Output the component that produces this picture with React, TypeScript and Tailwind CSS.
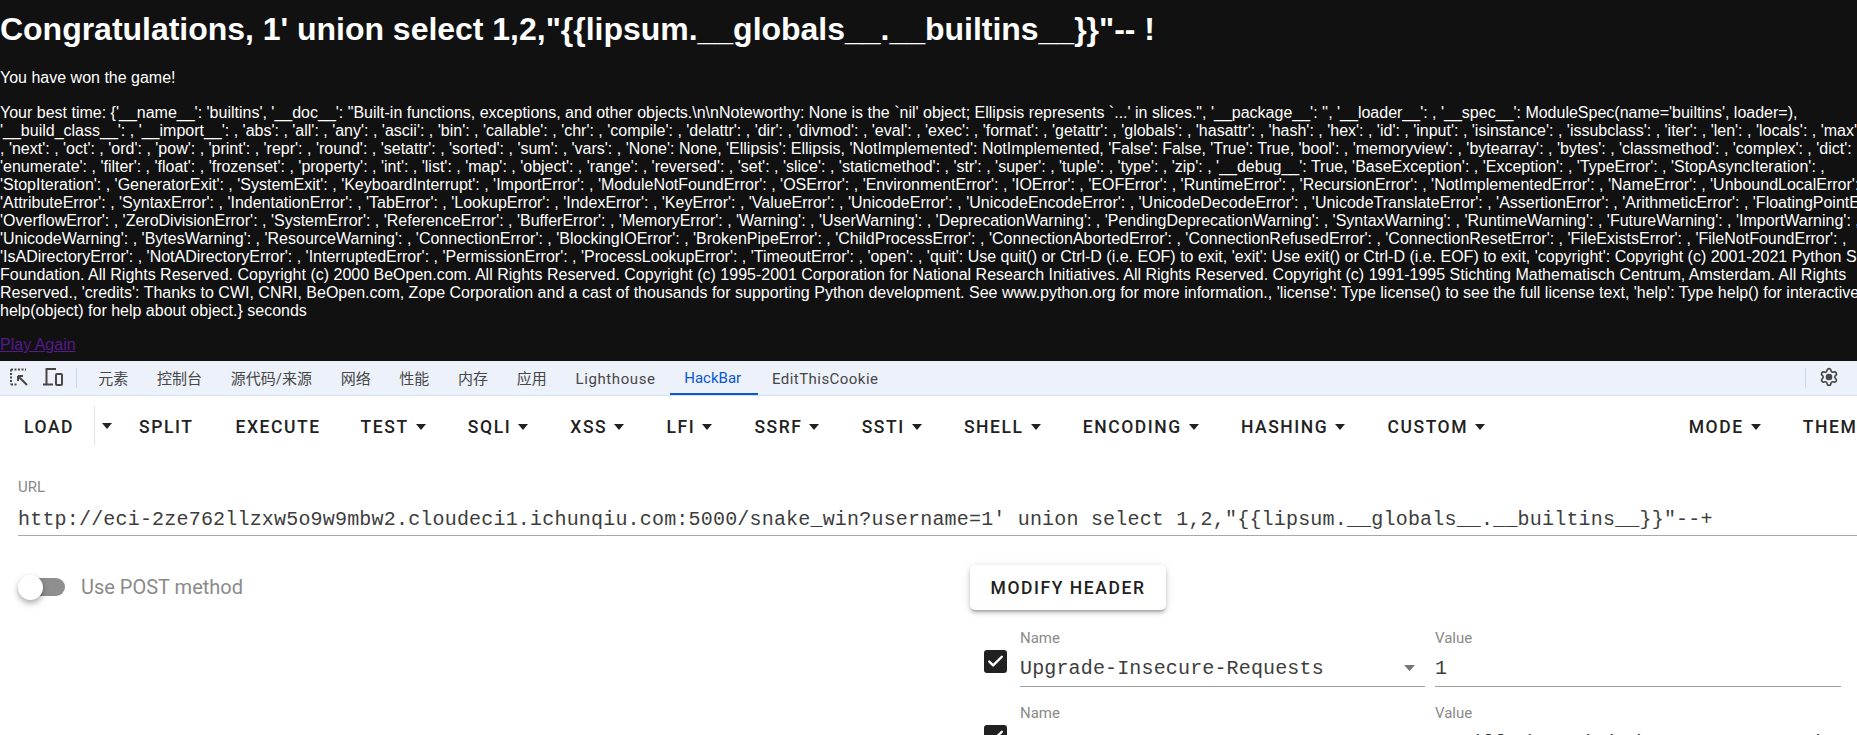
import { Settings, Check } from "lucide-react";

const lines = [
  `Your best time: {'__name__': 'builtins', '__doc__': "Built-in functions, exceptions, and other objects.\\n\\nNoteworthy: None is the \`nil' object; Ellipsis represents \`...' in slices.", '__package__': '', '__loader__': , '__spec__': ModuleSpec(name='builtins', loader=),`,
  `'__build_class__': , '__import__': , 'abs': , 'all': , 'any': , 'ascii': , 'bin': , 'callable': , 'chr': , 'compile': , 'delattr': , 'dir': , 'divmod': , 'eval': , 'exec': , 'format': , 'getattr': , 'globals': , 'hasattr': , 'hash': , 'hex': , 'id': , 'input': , 'isinstance': , 'issubclass': , 'iter': , 'len': , 'locals': , 'max': , 'min':`,
  `, 'next': , 'oct': , 'ord': , 'pow': , 'print': , 'repr': , 'round': , 'setattr': , 'sorted': , 'sum': , 'vars': , 'None': None, 'Ellipsis': Ellipsis, 'NotImplemented': NotImplemented, 'False': False, 'True': True, 'bool': , 'memoryview': , 'bytearray': , 'bytes': , 'classmethod': , 'complex': , 'dict': ,`,
  `'enumerate': , 'filter': , 'float': , 'frozenset': , 'property': , 'int': , 'list': , 'map': , 'object': , 'range': , 'reversed': , 'set': , 'slice': , 'staticmethod': , 'str': , 'super': , 'tuple': , 'type': , 'zip': , '__debug__': True, 'BaseException': , 'Exception': , 'TypeError': , 'StopAsyncIteration': ,`,
  `'StopIteration': , 'GeneratorExit': , 'SystemExit': , 'KeyboardInterrupt': , 'ImportError': , 'ModuleNotFoundError': , 'OSError': , 'EnvironmentError': , 'IOError': , 'EOFError': , 'RuntimeError': , 'RecursionError': , 'NotImplementedError': , 'NameError': , 'UnboundLocalError': ,`,
  `'AttributeError': , 'SyntaxError': , 'IndentationError': , 'TabError': , 'LookupError': , 'IndexError': , 'KeyError': , 'ValueError': , 'UnicodeError': , 'UnicodeEncodeError': , 'UnicodeDecodeError': , 'UnicodeTranslateError': , 'AssertionError': , 'ArithmeticError': , 'FloatingPointError': ,`,
  `'OverflowError': , 'ZeroDivisionError': , 'SystemError': , 'ReferenceError': , 'BufferError': , 'MemoryError': , 'Warning': , 'UserWarning': , 'DeprecationWarning': , 'PendingDeprecationWarning': , 'SyntaxWarning': , 'RuntimeWarning': , 'FutureWarning': , 'ImportWarning': ,`,
  `'UnicodeWarning': , 'BytesWarning': , 'ResourceWarning': , 'ConnectionError': , 'BlockingIOError': , 'BrokenPipeError': , 'ChildProcessError': , 'ConnectionAbortedError': , 'ConnectionRefusedError': , 'ConnectionResetError': , 'FileExistsError': , 'FileNotFoundError': ,`,
  `'IsADirectoryError': , 'NotADirectoryError': , 'InterruptedError': , 'PermissionError': , 'ProcessLookupError': , 'TimeoutError': , 'open': , 'quit': Use quit() or Ctrl-D (i.e. EOF) to exit, 'exit': Use exit() or Ctrl-D (i.e. EOF) to exit, 'copyright': Copyright (c) 2001-2021 Python Software`,
  `Foundation. All Rights Reserved. Copyright (c) 2000 BeOpen.com. All Rights Reserved. Copyright (c) 1995-2001 Corporation for National Research Initiatives. All Rights Reserved. Copyright (c) 1991-1995 Stichting Mathematisch Centrum, Amsterdam. All Rights`,
  `Reserved., 'credits': Thanks to CWI, CNRI, BeOpen.com, Zope Corporation and a cast of thousands for supporting Python development. See www.python.org for more information., 'license': Type license() to see the full license text, 'help': Type help() for interactive help, or`,
  `help(object) for help about object.} seconds`,
];

const tabs = [
  { t: "元素", c: "px-[14.35px]" },
  { t: "控制台", c: "px-[14.35px]" },
  { t: "源代码/来源", c: "px-[14.35px]" },
  { t: "网络", c: "px-[14.35px]" },
  { t: "性能", c: "px-[14.35px]" },
  { t: "内存", c: "px-[14.35px]" },
  { t: "应用", c: "px-[14.35px]" },
  { t: "Lighthouse", c: "px-[14.35px] tracking-[0.6px]" },
  { t: "HackBar", c: "pl-[14.35px] pr-[16.5px] border-b-2 border-[#0b57d0] text-[#0b57d0]" },
  { t: "EditThisCookie", c: "px-[14.35px] tracking-[0.45px]" },
];
const url = `http://eci-2ze762llzxw5o9w9mbw2.cloudeci1.ichunqiu.com:5000/snake_win?username=1' union select 1,2,"{{lipsum.__globals__.__builtins__}}"--+`;

function Caret() {
  return (
    <svg width="10" height="6" viewBox="0 0 10 6" className="ml-[7px] shrink-0">
      <path d="M0 0h10L5 6z" fill="#212121" />
    </svg>
  );
}

function ToolButton({ label, caret = true, extra = "" }: { label: string; caret?: boolean; extra?: string }) {
  return (
    <div className={`flex h-[45px] shrink-0 items-center pt-[2px] pl-5 text-[17.5px] font-medium tracking-[1.56px] text-[#212121] ${caret ? "pr-[22.2px]" : extra || "pr-5"}`}>
      <span>{label}</span>
      {caret && <Caret />}
    </div>
  );
}

function HeaderRow({ name, value }: { name: string; value: string }) {
  return (
    <div className="mb-[17px] flex items-start pl-[14px]">
      <div className="mr-[13px] mt-[21px] flex h-[23px] w-[23px] shrink-0 items-center justify-center rounded-[3px] bg-[#212121]">
        <Check size={19} strokeWidth={3} color="#ffffff" />
      </div>
      <div className="mr-[10px] w-[405px] shrink-0">
        <div className="h-[18px] text-[15px] leading-[18px] text-[#8a8a8a]">Name</div>
        <div className="flex h-[40px] items-center justify-between border-b border-[#9e9e9e] pr-[10px] pt-[5px] font-['Liberation_Mono',monospace] text-[20px] tracking-[0.15px] text-[#3d3d3d]">
          <span>{name}</span>
          <svg width="11" height="6" viewBox="0 0 11 6" className="-translate-y-[1px]"><path d="M0 0h11L5.5 6z" fill="#757575" /></svg>
        </div>
      </div>
      <div className="w-[406px] shrink-0">
        <div className="h-[18px] text-[15px] leading-[18px] text-[#8a8a8a]">Value</div>
        <div className="flex h-[40px] items-center whitespace-nowrap border-b border-[#9e9e9e] pt-[5px] font-['Liberation_Mono',monospace] text-[20px] tracking-[0.15px] text-[#3d3d3d]">
          {value}
        </div>
      </div>
    </div>
  );
}

export default function App() {
  return (
    <div className="flex h-[735px] w-full flex-col overflow-hidden bg-white font-['Roboto',sans-serif]">
      <div className="h-[361px] shrink-0 overflow-hidden whitespace-nowrap bg-[#111111] pt-[11px] font-['Liberation_Sans',sans-serif] text-[16px] leading-[18px] text-white">
        <h1 className="h-[37px] text-[32px] font-bold leading-[37px] tracking-[-0.02px]">
          Congratulations, 1' union select 1,2,"{"{{"}lipsum.__globals__.__builtins__{"}}"}"-- !
        </h1>
        <p className="mt-[21px]">You have won the game!</p>
        <div className="mt-[17px]">
          {lines.map((l, i) => (
            <div key={i} className="h-[18px]">{l}</div>
          ))}
        </div>
        <a className="mt-4 block text-[#551a8b] underline">Play Again</a>
      </div>

      <div className="flex h-[35px] shrink-0 items-stretch border-b border-[#cfe0f7] bg-[#ecf1fa] font-['Roboto','Noto_Sans_CJK_SC',sans-serif] text-[15px] text-[#474747]">
        <div className="flex w-[76px] shrink-0 items-center pb-[2px] pl-[10px]">
          <svg width="18" height="18" viewBox="0 0 18 18" fill="none" stroke="#474747">
            <path d="M1 1.5h15M1 1.5v15M1 16.5h6" strokeWidth="2" strokeDasharray="2 1.5" />
            <path d="M8 8v5M8 8h5M8 8l9 9" strokeWidth="2" />
          </svg>
          <svg width="21" height="18" viewBox="0 0 21 18" fill="none" stroke="#474747" strokeWidth="2" className="ml-[14px]">
            <path d="M14 1H4.5v15M1 16.5h10" />
            <rect x="14" y="6" width="6" height="11" rx="1" />
          </svg>
        </div>
        <div className="my-[7px] w-px shrink-0 bg-[#c9d9f2]" />
        <div className="ml-[7px] flex">
          {tabs.map(({ t, c }) => (
            <div key={t} className={`flex items-center pt-[2px] ${c}`}>{t}</div>
          ))}
        </div>
        <div className="my-[7px] ml-auto w-px shrink-0 bg-[#c9d9f2]" />
        <div className="flex w-[51px] shrink-0 items-center justify-center pb-[2px] pr-[5px]">
          <div className="relative flex items-center justify-center">
            <Settings size={20} strokeWidth={2} color="#474747" />
            <div className="absolute h-[6px] w-[6px] rounded-full bg-[#474747]" />
          </div>
        </div>
      </div>

      <div className="flex h-[60px] w-[1908px] shrink-0 items-center pl-1">
        <ToolButton label="LOAD" caret={false} />
        <div className="h-10 w-px shrink-0 bg-[#e4e4e4]" />
        <div className="flex h-[45px] w-[24px] shrink-0 items-center justify-center">
          <svg width="10" height="6" viewBox="0 0 10 6"><path d="M0 0h10L5 6z" fill="#212121" /></svg>
        </div>
        <ToolButton label="SPLIT" caret={false} extra="pr-[22px]" />
        <ToolButton label="EXECUTE" caret={false} />
        {["TEST", "SQLI", "XSS", "LFI", "SSRF", "SSTI", "SHELL", "ENCODING", "HASHING", "CUSTOM"].map((l) => (
          <ToolButton key={l} label={l} />
        ))}
        <div className="flex-1" />
        <ToolButton label="MODE" />
        <ToolButton label="THEME" />
      </div>

      <div className="pl-[18px]">
        <div className="mt-[22px] h-[19px] text-[15px] leading-[19px] text-[#8a8a8a]">URL</div>
        <div className="flex h-[39px] items-center whitespace-nowrap border-b border-[#a8a8a8] pt-[7px] font-['Liberation_Mono',monospace] text-[20px] tracking-[0.19px] text-[#3d3d3d]">
          {url}
        </div>
      </div>

      <div className="mt-[29px] flex">
        <div className="w-[970px] shrink-0 pl-[18px] pt-[7px]">
          <div className="flex items-center">
            <div className="relative h-[25px] w-[47px] shrink-0">
              <div className="absolute left-[4px] top-[3px] h-[18px] w-[43px] rounded-full bg-[#8f8f8f]" />
              <div className="absolute left-0 top-0 h-[25px] w-[25px] rounded-full bg-white shadow-[0_3px_6px_rgba(0,0,0,0.35)]" />
            </div>
            <span className="ml-4 text-[20px] text-[#8a8a8a]">Use POST method</span>
          </div>
        </div>
        <div className="w-[880px] shrink-0">
          <div className="flex h-[45px] w-[196px] items-center justify-center rounded-[5px] bg-white pt-[2px] text-[17.5px] font-medium tracking-[1.56px] text-[#212121] shadow-[0_3px_3px_-2px_rgba(0,0,0,0.25),0_3px_4px_0_rgba(0,0,0,0.16),0_1px_8px_0_rgba(0,0,0,0.12)]">
            MODIFY HEADER
          </div>
          <div className="mt-[19px]">
            <HeaderRow name="Upgrade-Insecure-Requests" value="1" />
            <HeaderRow name="User-Agent" value="Mozilla/5.0 (Windows NT 10.0; Win64; x64) AppleWebKit/537.36" />
          </div>
        </div>
      </div>
    </div>
  );
}
